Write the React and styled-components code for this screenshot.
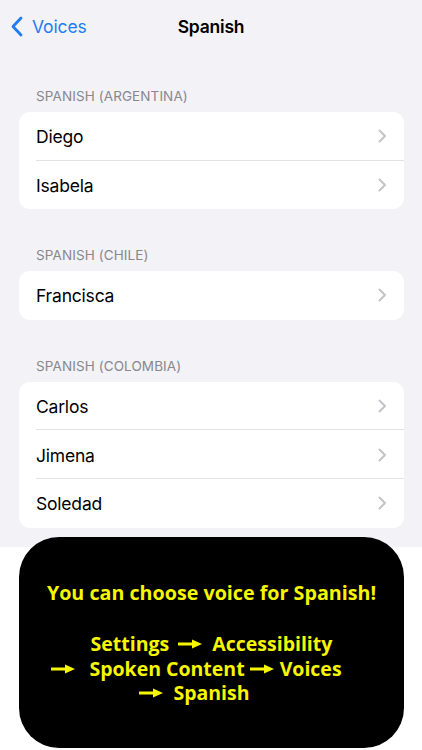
import React from "react";
import styled, { createGlobalStyle } from "styled-components";

const Global = createGlobalStyle`
  html, body { margin: 0; padding: 0; background: #ffffff; }
  body { font-family: Inter, "Noto Sans", "Liberation Sans", sans-serif; -webkit-font-smoothing: antialiased; }
`;

const Page = styled.div`
  position: relative;
  width: 422px;
  height: 750px;
  overflow: hidden;
  background: #ffffff;
`;

const Screen = styled.div`
  background: #f2f2f7;
  height: 547px;
  display: flex;
  flex-direction: column;
`;

const NavBar = styled.div`
  position: relative;
  height: 52px;
  display: flex;
  align-items: center;
  justify-content: center;
`;

const Back = styled.div`
  position: absolute;
  left: 10px;
  top: 0;
  bottom: 0;
  display: flex;
  align-items: center;
  gap: 9px;
  color: #1f7cf2;
  font-size: 17.5px;
  letter-spacing: -0.1px;
`;

const Title = styled.div`
  font-size: 17.5px;
  font-weight: 600;
  color: #000;
  letter-spacing: -0.2px;
`;

const Content = styled.div`
  padding: 36px 18px 0 19px;
  display: flex;
  flex-direction: column;
  gap: 38px;
`;

const Section = styled.div`
  display: flex;
  flex-direction: column;
`;

const Header = styled.div`
  font-size: 13.5px;
  color: #88888d;
  padding: 0 0 8px 17px;
  letter-spacing: 0.1px;
  line-height: 16px;
`;

const Card = styled.div`
  background: #fff;
  border-radius: 11px;
  overflow: hidden;
`;

const Row = styled.div`
  height: 48.6px;
  display: flex;
  align-items: center;
  padding-left: 17px;
  position: relative;
  &:not(:last-child)::after {
    content: "";
    position: absolute;
    left: 17px;
    right: 0;
    bottom: 0;
    height: 1px;
    background: #e2e2e6;
  }
`;

const RowLabel = styled.div`
  flex: 1;
  font-size: 17.5px;
  color: #000;
  letter-spacing: -0.2px;
  padding-top: 1px;
`;

const Chev = styled.svg`
  width: 9px;
  height: 14px;
  margin-right: 17px;
`;

const Overlay = styled.div`
  position: absolute;
  left: 19px;
  top: 537px;
  width: 385px;
  height: 211px;
  background: #000;
  border-radius: 40px;
  display: flex;
  flex-direction: column;
  align-items: center;
  padding-top: 43px;
  box-sizing: border-box;
  color: #f6f600;
  font-family: "Open Sans", "Noto Sans", sans-serif;
  font-weight: 700;
`;

const Lead = styled.div`
  font-size: 19.7px;
  line-height: 26px;
`;

const Steps = styled.div`
  margin-top: 26px;
  display: flex;
  flex-direction: column;
  align-items: center;
  font-size: 19.5px;
  line-height: 24.5px;
`;

const StepLine = styled.div`
  display: flex;
  align-items: center;
  white-space: pre;
  transform: translateX(${(p) => p.$shift || 0}px);
`;

const ArrowSvg = styled.svg`
  flex: none;
  width: 24px;
  height: 10px;
  margin: 0 ${(p) => p.$r || 0}px 0 ${(p) => p.$l || 0}px;
`;

const Arrow = ({ l, r }) => (
  <ArrowSvg viewBox="0 0 24 10" $l={l} $r={r}>
    <path d="M0 5 H16" stroke="#f6f600" strokeWidth="3" />
    <path d="M14 0.5 L24 5 L14 9.5 Z" fill="#f6f600" />
  </ArrowSvg>
);

const Chevron = () => (
  <Chev viewBox="0 0 9 14">
    <path d="M1.5 1.5 L7 7 L1.5 12.5" fill="none" stroke="#c4c4c8" strokeWidth="2" strokeLinecap="round" strokeLinejoin="round" />
  </Chev>
);

const sections = [
  { title: "SPANISH (ARGENTINA)", items: ["Diego", "Isabela"] },
  { title: "SPANISH (CHILE)", items: ["Francisca"] },
  { title: "SPANISH (COLOMBIA)", items: ["Carlos", "Jimena", "Soledad"] },
];

export default function App() {
  return (
    <Page>
      <Global />
      <Screen>
        <NavBar>
          <Back>
            <svg width="13" height="21" viewBox="0 0 13 21">
              <path d="M11 2 L3 10.5 L11 19" fill="none" stroke="#1f7cf2" strokeWidth="2.8" strokeLinecap="round" strokeLinejoin="round" />
            </svg>
            <span>Voices</span>
          </Back>
          <Title>Spanish</Title>
        </NavBar>
        <Content>
          {sections.map((s) => (
            <Section key={s.title}>
              <Header>{s.title}</Header>
              <Card>
                {s.items.map((it) => (
                  <Row key={it}>
                    <RowLabel>{it}</RowLabel>
                    <Chevron />
                  </Row>
                ))}
              </Card>
            </Section>
          ))}
        </Content>
      </Screen>
      <Overlay>
        <Lead>You can choose voice for Spanish!</Lead>
        <Steps>
          <StepLine>
            <span>Settings</span>
            <Arrow l={9} r={10} />
            <span>Accessibility</span>
          </StepLine>
          <StepLine $shift={-15}>
            <Arrow r={14} />
            <span>Spoken Content</span>
            <Arrow l={5} r={6} />
            <span>Voices</span>
          </StepLine>
          <StepLine $shift={-17}>
            <Arrow r={10} />
            <span>Spanish</span>
          </StepLine>
        </Steps>
      </Overlay>
    </Page>
  );
}
